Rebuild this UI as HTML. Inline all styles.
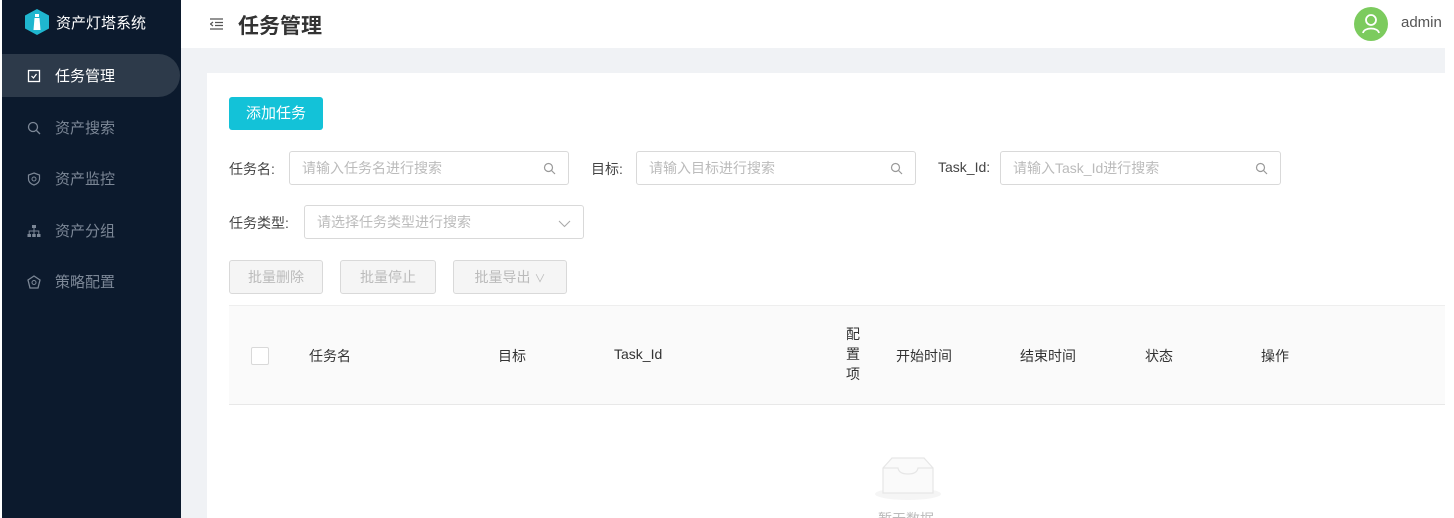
<!DOCTYPE html>
<html style="width:1454px;height:518px;overflow:hidden"><head><meta charset="utf-8">
<style>
*{margin:0;padding:0;box-sizing:border-box}
html{width:1454px;height:518px;overflow:hidden}
body{width:1454px;height:518px;overflow:hidden;background:#fff;font-family:"Liberation Sans","Noto Sans CJK SC",sans-serif;position:relative;font-size:14px;color:#333}
.side{position:absolute;left:2px;top:0;width:179px;height:518px;background:#0c1a2d}
.logo{position:absolute;left:22px;top:8px;display:flex;align-items:center;color:#fff;font-size:15px}
.logo .hex{width:26px;height:28px;margin-right:6px}
.active{position:absolute;left:0;top:54px;width:178px;height:43px;background:#2d3a4a;border-radius:0 22px 22px 0}
.mi{position:absolute;left:25px;display:flex;align-items:center;color:#7c8796;font-size:15px}
.mi .ic{width:14px;height:14px;margin-right:14px;display:inline-block}
.mi.on{color:#fff}
.hdr{position:absolute;left:181px;top:0;width:1264px;height:48px;background:#fff}
.gray{position:absolute;left:181px;top:48px;width:1264px;height:470px;background:#f0f2f5}
.card{position:absolute;left:207px;top:73px;width:1238px;height:445px;background:#fff}
.btn{position:absolute;left:229px;top:97px;width:94px;height:33px;background:#13c2d8;color:#fff;border-radius:3px;font-size:15px;text-align:center;line-height:33px}
.lbl{position:absolute;font-size:14px;color:#444}
.inp{position:absolute;height:34px;border:1px solid #d9d9d9;border-radius:3px;color:#bbb;font-size:14px;line-height:32px;padding-left:12px}
.inp svg{position:absolute;right:12px;top:10px}
.dbtn{position:absolute;top:260px;height:34px;border:1px solid #d9d9d9;background:#f5f5f5;border-radius:3px;color:#bbb;font-size:14px;text-align:center;line-height:32px}
.th{position:absolute;left:229px;top:305px;width:1216px;height:100px;background:#fafafa;border-top:1px solid #eee;border-bottom:1px solid #e8e8e8}
.tc{position:absolute;top:346px;font-size:14px;color:#333}
</style></head><body>
<div class="side">
 <div class="logo"><svg class="hex" viewBox="0 0 26 28"><path d="M13 1 L25 7.5 L25 20.5 L13 27 L1 20.5 L1 7.5Z" fill="#1fb6cf"/><rect x="11" y="6" width="4" height="3" fill="#fff"/><path d="M10.5 10 h5 l1 12 h-7z" fill="#fff"/></svg>资产灯塔系统</div>
 <div class="active"></div>
 <div class="mi on" style="top:65px"><svg class="ic" viewBox="0 0 14 14"><rect x="1.5" y="1.5" width="11" height="11" fill="none" stroke="#fff" stroke-width="1.3"/><path d="M4.5 7 l2 2 l3-4" fill="none" stroke="#fff" stroke-width="1.2"/></svg>任务管理</div>
 <div class="mi" style="top:117px"><svg class="ic" viewBox="0 0 14 14"><circle cx="6" cy="6" r="4.5" fill="none" stroke="#7c8796" stroke-width="1.3"/><path d="M9.5 9.5 L13 13" stroke="#7c8796" stroke-width="1.3"/></svg>资产搜索</div>
 <div class="mi" style="top:168px"><svg class="ic" viewBox="0 0 14 14"><path d="M7 1 L12.5 3 V7 C12.5 10 10 12 7 13 C4 12 1.5 10 1.5 7 V3Z" fill="none" stroke="#7c8796" stroke-width="1.2"/><circle cx="7" cy="7" r="2" fill="none" stroke="#7c8796"/></svg>资产监控</div>
 <div class="mi" style="top:220px"><svg class="ic" viewBox="0 0 14 14"><rect x="5" y="1" width="4" height="3" fill="#7c8796"/><rect x="0.5" y="10" width="3.5" height="3" fill="#7c8796"/><rect x="5.2" y="10" width="3.5" height="3" fill="#7c8796"/><rect x="10" y="10" width="3.5" height="3" fill="#7c8796"/><path d="M7 4v6M2.2 10V7h9.6v3" fill="none" stroke="#7c8796"/></svg>资产分组</div>
 <div class="mi" style="top:271px"><svg class="ic" viewBox="0 0 14 14"><path d="M7 1 L13 5 L11 13 H3 L1 5Z" fill="none" stroke="#7c8796" stroke-width="1.3"/><circle cx="7" cy="7.5" r="2" fill="none" stroke="#7c8796"/></svg>策略配置</div>
</div>
<div class="hdr">
 <svg style="position:absolute;left:29px;top:18px" width="13" height="12" viewBox="0 0 13 12"><path d="M0 1h13M5 4.5h8M5 7.5h8M0 11h13M3 4 L0.5 6 L3 8" fill="none" stroke="#555" stroke-width="1.2"/></svg>
 <div style="position:absolute;left:57px;top:10px;font-size:21px;font-weight:bold;color:#333">任务管理</div>
 <div style="position:absolute;left:1173px;top:7px;width:34px;height:34px;border-radius:50%;background:#7ccb5e"><svg width="34" height="34" viewBox="0 0 34 34"><circle cx="17" cy="13" r="5" fill="none" stroke="#fff" stroke-width="1.8"/><path d="M9 26 C10 20 24 20 25 26" fill="none" stroke="#fff" stroke-width="1.8"/></svg></div>
 <div style="position:absolute;left:1220px;top:14px;font-size:15px;color:#555">admin</div>
</div>
<div class="gray"></div>
<div class="card"></div>
<div class="btn">添加任务</div>
<div class="lbl" style="left:229px;top:159px">任务名:</div>
<div class="inp" style="left:289px;top:151px;width:280px">请输入任务名进行搜索<svg width="13" height="13" viewBox="0 0 13 13"><circle cx="5.5" cy="5.5" r="4" fill="none" stroke="#999" stroke-width="1.2"/><path d="M8.5 8.5L12 12" stroke="#999" stroke-width="1.2"/></svg></div>
<div class="lbl" style="left:591px;top:159px">目标:</div>
<div class="inp" style="left:636px;top:151px;width:280px">请输入目标进行搜索<svg width="13" height="13" viewBox="0 0 13 13"><circle cx="5.5" cy="5.5" r="4" fill="none" stroke="#999" stroke-width="1.2"/><path d="M8.5 8.5L12 12" stroke="#999" stroke-width="1.2"/></svg></div>
<div class="lbl" style="left:938px;top:159px">Task_Id:</div>
<div class="inp" style="left:1000px;top:151px;width:281px">请输入Task_Id进行搜索<svg width="13" height="13" viewBox="0 0 13 13"><circle cx="5.5" cy="5.5" r="4" fill="none" stroke="#999" stroke-width="1.2"/><path d="M8.5 8.5L12 12" stroke="#999" stroke-width="1.2"/></svg></div>
<div class="lbl" style="left:229px;top:213px">任务类型:</div>
<div class="inp" style="left:304px;top:205px;width:280px">请选择任务类型进行搜索<svg width="13" height="13" viewBox="0 0 13 13" style="top:11px"><path d="M1 4 L6.5 9.5 L12 4" fill="none" stroke="#aaa" stroke-width="1.1"/></svg></div>
<div class="dbtn" style="left:229px;width:94px">批量删除</div>
<div class="dbtn" style="left:340px;width:96px">批量停止</div>
<div class="dbtn" style="left:453px;width:114px">批量导出 <span style="font-size:11px">∨</span></div>
<div class="th"></div>
<div style="position:absolute;left:251px;top:347px;width:18px;height:18px;border:1px solid #d9d9d9;background:#fff;border-radius:2px"></div>
<div class="tc" style="left:309px">任务名</div>
<div class="tc" style="left:498px">目标</div>
<div class="tc" style="left:614px">Task_Id</div>
<div class="tc" style="left:846px;top:324px;line-height:20px;width:16px">配置项</div>
<div class="tc" style="left:896px">开始时间</div>
<div class="tc" style="left:1020px">结束时间</div>
<div class="tc" style="left:1145px">状态</div>
<div class="tc" style="left:1261px">操作</div>
<svg style="position:absolute;left:872px;top:455px" width="72" height="46" viewBox="0 0 72 46"><ellipse cx="36" cy="39" rx="33" ry="6" fill="#f5f5f5"/><path d="M11 13 L20 3 H52 L61 13 V38 H11Z" fill="#fafafa" stroke="#e6e6e6" stroke-width="1.2"/><path d="M11 13 H26 Q27 19 36 19 Q45 19 46 13 H61" fill="none" stroke="#e6e6e6" stroke-width="1.2"/></svg>
<div style="position:absolute;left:878px;top:511px;height:7px;overflow:hidden;font-size:14px;line-height:16px;color:#bbb">暂无数据</div>
</body></html>
